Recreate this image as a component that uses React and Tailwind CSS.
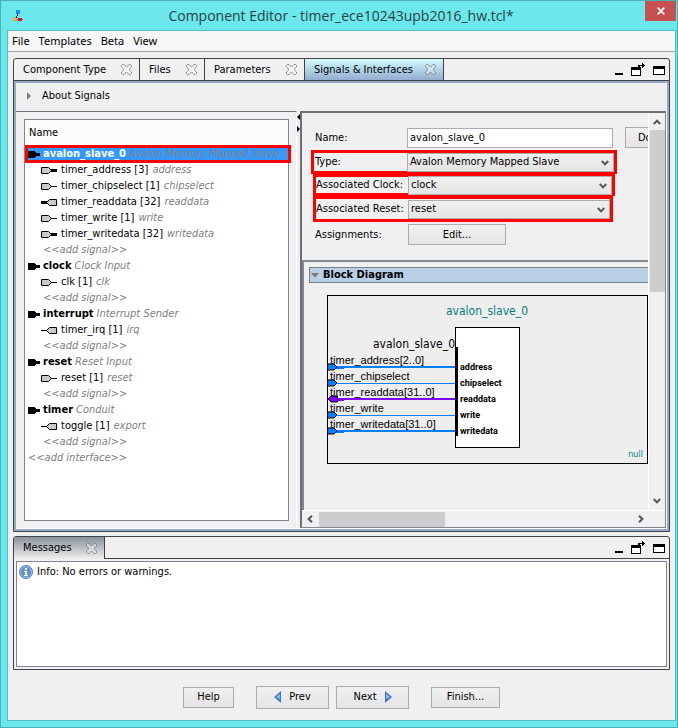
import React, { useState } from 'react';

const TREE = [
  {
    name: 'avalon_slave_0',
    kind: 'Avalon Memory Mapped Slave',
    signals: [
      { name: 'timer_address [3]', role: 'address', dir: 'in', wide: true },
      { name: 'timer_chipselect [1]', role: 'chipselect', dir: 'in' },
      { name: 'timer_readdata [32]', role: 'readdata', dir: 'out', wide: true },
      { name: 'timer_write [1]', role: 'write', dir: 'in' },
      { name: 'timer_writedata [32]', role: 'writedata', dir: 'in', wide: true },
    ],
  },
  { name: 'clock', kind: 'Clock Input', signals: [{ name: 'clk [1]', role: 'clk', dir: 'in' }] },
  { name: 'interrupt', kind: 'Interrupt Sender', signals: [{ name: 'timer_irq [1]', role: 'irq', dir: 'out' }] },
  { name: 'reset', kind: 'Reset Input', signals: [{ name: 'reset [1]', role: 'reset', dir: 'in' }] },
  { name: 'timer', kind: 'Conduit', signals: [{ name: 'toggle [1]', role: 'export', dir: 'out' }] },
];

const WIRES = [
  { label: 'timer_address[2..0]', port: 'address', y: 72, wide: true },
  { label: 'timer_chipselect', port: 'chipselect', y: 88 },
  { label: 'timer_readdata[31..0]', port: 'readdata', y: 104, wide: true, out: true },
  { label: 'timer_write', port: 'write', y: 120 },
  { label: 'timer_writedata[31..0]', port: 'writedata', y: 136, wide: true },
];

function AppIcon() {
  return (
    <svg className="w-4 h-4" viewBox="0 0 16 16" shapeRendering="crispEdges">
      <path d="M2 11h10v1H2z" fill="#777" />
      <path d="M6 6h1v2H6zM5 8h1v2H5z" fill="#111" />
      <rect x="5" y="2" width="4" height="4" fill="#1e90e8" />
      <path d="M3 9h2v1h1v3H2v-3h1z" fill="#f0a040" />
      <path d="M3 11h1v1H3z" fill="#fff" />
      <rect x="7" y="10" width="4" height="3" fill="#e81030" />
      <path d="M8 11h1v1H8z" fill="#500" />
    </svg>
  );
}

function CloseCross() {
  return (
    <svg className="w-[11px] h-[11px]" viewBox="0 0 11 11">
      <path
        d="M1.500.5h1.500l2.500 2.600L8 .5h1.500l1 1V3L7.900 5.500l2.600 2.500v1.500l-1 1H8L5.500 7.900 3 10.500H1.500l-1-1V8l2.600-2.500L.5 3V1.500z"
        fill="#fff"
        fillOpacity="0.4"
        stroke="#777"
        strokeWidth="0.8"
      />
    </svg>
  );
}

function PaneControls() {
  return (
    <div className="ml-auto flex items-center gap-2 pr-1">
      <button type="button" aria-label="Minimize" className="w-2">
        <svg className="w-2 h-3" viewBox="0 0 8 12" shapeRendering="crispEdges">
          <rect x="0" y="9" width="8" height="2" fill="#000" />
        </svg>
      </button>
      <button type="button" aria-label="Detach" className="w-[14px]">
        <svg className="w-[14px] h-[14px]" viewBox="0 0 14 14" shapeRendering="crispEdges">
          <rect x="0" y="4" width="10" height="9" fill="#000" />
          <rect x="1" y="7" width="8" height="5" fill="#fff" />
          <path d="M7 2h5v1H9v2H7z" fill="#000" />
          <path d="M11 0h1v1h1v1h1v1h-1v1h-1v1h-1z" fill="#000" />
        </svg>
      </button>
      <button type="button" aria-label="Maximize" className="w-3">
        <svg className="w-3 h-3" viewBox="0 0 12 12" shapeRendering="crispEdges">
          <rect x="0" y="2" width="12" height="9" fill="#000" />
          <rect x="1" y="5" width="10" height="5" fill="#fff" />
        </svg>
      </button>
    </div>
  );
}

function InterfaceIcon() {
  return (
    <svg className="w-3 h-[7px] shrink-0" viewBox="0 0 12 7" shapeRendering="crispEdges">
      <path d="M0 0h6l2 2h4v3H8L6 7H0z" fill="#000" />
    </svg>
  );
}

function SignalIcon({ dir, wide }) {
  return (
    <svg className="w-4 h-[7px] shrink-0" viewBox="0 0 16 7">
      <g transform={dir === 'out' ? 'matrix(-1 0 0 1 16 0)' : undefined}>
        <path d="M.5.5h7l3 3-3 3h-7z" fill="#c8c8c8" stroke="#000" />
        <path d={wide ? 'M10 2h6v3h-6z' : 'M10 3h6v1h-6z'} fill="#000" />
      </g>
    </svg>
  );
}

function Chevron({ className }) {
  return (
    <svg className={`w-2 h-[6px] ${className}`} viewBox="0 0 8 6">
      <path d="M.8 1l3.2 3.4L7.2 1" fill="none" stroke="#555" strokeWidth="2" />
    </svg>
  );
}

function Tab({ label, active, onClick, className }) {
  return (
    <div
      className={`flex items-center justify-between border-r border-[#3f4347] pl-[9px] pr-[7px] ${
        active ? 'bg-linear-to-b from-[#d2fbfd] to-[#93aed0]' : ''
      } ${className}`}
    >
      <button type="button" onClick={onClick}>{label}</button>
      <button type="button" aria-label={`Close ${label}`}><CloseCross /></button>
    </div>
  );
}

function SelectRow({ id, label, options, boxClass }) {
  return (
    <div className={`relative z-10 flex items-center border-[3px] border-[#f00] ${boxClass}`}>
      <label htmlFor={id} className="w-[92px] shrink-0 whitespace-nowrap">{label}</label>
      <div className="relative flex-1">
        <select
          id={id}
          className="block h-[19px] w-full appearance-none border border-[#acacac] bg-linear-to-b from-[#f0f0f0] to-[#e5e5e5] pl-[2px] outline-none"
        >
          {options.map((o) => (
            <option key={o}>{o}</option>
          ))}
        </select>
        <Chevron className="pointer-events-none absolute right-[5px] top-[7px]" />
      </div>
    </div>
  );
}

function SignalTree() {
  const [selected, setSelected] = useState('avalon_slave_0');

  return (
    <div className="flex-1 border border-[#82878f] bg-white">
      <div className="flex h-[26px] items-center border-b border-[#82878f] bg-[#fcfcfc] pl-1">Name</div>
      <ul className="leading-4 whitespace-nowrap text-[#808080]">
        {TREE.map((itf) => (
          <li key={itf.name}>
            <div
              onClick={() => setSelected(itf.name)}
              className={`relative flex h-4 items-center gap-[3px] pl-[3px] ${
                selected === itf.name ? 'bg-[#3399ff]' : ''
              }`}
            >
              <InterfaceIcon />
              <b className={selected === itf.name ? 'text-white' : 'text-black'}>{itf.name}</b>
              <i>{itf.kind}</i>
              {itf.name === 'avalon_slave_0' && (
                <span className="absolute -inset-y-px left-0 -right-[3px] border-[3px] border-[#f00]" />
              )}
            </div>
            <ul>
              {itf.signals.map((s) => (
                <li key={s.name} className="flex h-4 items-center gap-1 pl-4">
                  <SignalIcon dir={s.dir} wide={s.wide} />
                  <span className="text-black">{s.name}</span>
                  <i>{s.role}</i>
                </li>
              ))}
              <li className="h-4 pl-[18px] italic">&lt;&lt;add signal&gt;&gt;</li>
            </ul>
          </li>
        ))}
        <li className="h-4 pl-[3px] italic">&lt;&lt;add interface&gt;&gt;</li>
      </ul>
    </div>
  );
}

function BlockDiagram() {
  return (
    <svg className="block h-[170px] w-[322px]" viewBox="0 0 322 170">
      <rect x="0.5" y="0.5" width="320" height="168" fill="#eee" stroke="#000" />
      <text x="160" y="20" textAnchor="middle" fontSize="12" fill="#008080">avalon_slave_0</text>
      <rect x="128.5" y="32.5" width="64" height="120" fill="#fff" stroke="#000" />
      <text x="128" y="53" textAnchor="end" fontSize="12">avalon_slave_0</text>
      {WIRES.map((w) => {
        const color = w.out ? '#8000ff' : '#0080ff';
        return (
          <g key={w.port}>
            <text x="3" y={w.y - 3} fontSize="11" fontFamily="Liberation Sans, sans-serif">{w.label}</text>
            <rect x="1" y={w.wide ? w.y - 1 : w.y} width="127" height={w.wide ? 2 : 1} fill={color} />
            {w.wide && <rect x="9" y={w.y - 1} width="8" height="3" fill={color} />}
            <path
              d={w.out ? `M10.5 ${w.y - 3}v6H4l-3-3 3-3z` : `M.5 ${w.y - 3}H7l3 3-3 3H.5z`}
              fill={color}
              stroke="#000"
            />
            <text x="133" y={w.y + 3} fontSize="9" fontWeight="bold" fontFamily="Roboto, sans-serif">{w.port}</text>
          </g>
        );
      })}
      <rect x="129" y="52" width="2" height="89" fill="#000" />
      <text x="316" y="162" textAnchor="end" fontSize="9" fill="#008080">null</text>
    </svg>
  );
}

function SettingsPane() {
  const [name, setName] = useState('avalon_slave_0');

  return (
    <div className="flex min-w-0 flex-1 flex-col border-t-2 border-l-2 border-r border-b border-[#6b6f75] border-r-[#82878f] border-b-[#82878f]">
      <div className="flex min-h-0 flex-1">
        <div className="flex min-w-0 flex-1 flex-col overflow-hidden">
          <div className="flex items-center pt-[14px] pl-[13px]">
            <label htmlFor="name" className="w-[92px] shrink-0">Name:</label>
            <input
              id="name"
              value={name}
              onChange={(e) => setName(e.target.value)}
              className="h-5 w-[206px] shrink-0 border border-[#abadb3] bg-white pl-[2px] outline-none"
            />
            <button
              type="button"
              className="ml-3 h-[21px] w-20 shrink-0 border border-[#acacac] bg-linear-to-b from-[#f0f0f0] to-[#e5e5e5] pl-3 text-left"
            >
              Do
            </button>
          </div>
          <SelectRow
            id="type"
            label="Type:"
            options={['Avalon Memory Mapped Slave']}
            boxClass="mt-[2px] ml-[9px] h-6 w-[306px] pl-[1px]"
          />
          <SelectRow
            id="clock"
            label="Associated Clock:"
            options={['clock']}
            boxClass="ml-[11px] h-[22px] w-[302px]"
          />
          <SelectRow
            id="reset"
            label="Associated Reset:"
            options={['reset']}
            boxClass="ml-[11px] h-[26px] w-[300px]"
          />
          <div className="mt-[2px] flex items-center pl-[13px]">
            <span className="w-[93px] shrink-0">Assignments:</span>
            <button
              type="button"
              className="h-[21px] w-[98px] border border-[#acacac] bg-linear-to-b from-[#f0f0f0] to-[#e5e5e5]"
            >
              Edit...
            </button>
          </div>
          <div className="mt-[15px] flex-1 border-t-2 border-l-2 border-[#82878f] pt-[5px] pl-[5px]">
            <button
              type="button"
              className="flex h-4 w-full items-center gap-1 border border-r-0 border-[#7a8088] bg-[#b8cfe5] pl-px font-bold"
            >
              <svg className="w-2 h-[5px]" viewBox="0 0 8 5">
                <path d="M0 0h8L4 4.500z" fill="#777" />
              </svg>
              Block Diagram
            </button>
            <div className="pt-3 pl-[18px]">
              <BlockDiagram />
            </div>
          </div>
        </div>
        <div className="flex w-[17px] shrink-0 flex-col items-center border-l border-white py-[6px]">
          <Chevron className="rotate-180" />
          <div className="mt-[5px] h-[162px] w-[15px] bg-[#cdcdcd]" />
          <Chevron className="mt-auto" />
        </div>
      </div>
      <div className="flex h-[17px] items-center border-t border-white pr-[20px] pl-1">
        <Chevron className="rotate-90" />
        <div className="ml-[5px] h-[15px] w-[126px] bg-[#cdcdcd]" />
        <Chevron className="ml-auto -rotate-90" />
      </div>
    </div>
  );
}

const TABS = [
  { label: 'Component Type', width: 'w-[126px]' },
  { label: 'Files', width: 'w-[65px]' },
  { label: 'Parameters', width: 'w-[100px]' },
  { label: 'Signals & Interfaces', width: 'w-[139px]' },
];

export default function App() {
  const [tab, setTab] = useState('Signals & Interfaces');

  return (
    <div className="flex min-h-screen flex-col border border-[#4bb0b6] bg-[#6ae8ec] pr-px pb-[6px] pl-[6px] font-['DejaVu_Sans_Condensed','DejaVu_Sans',sans-serif] text-[11px] leading-4 text-black">
      <header className="flex h-[29px] items-center pl-1">
        <AppIcon />
        <h1 className="flex-1 pl-[10px] text-center font-['Open_Sans','Noto_Sans',sans-serif] text-sm text-[#2a4044]">
          Component Editor - timer_ece10243upb2016_hw.tcl*
        </h1>
        <button
          type="button"
          aria-label="Close"
          className="flex h-5 w-[31px] items-center justify-center self-start bg-[#c75050]"
        >
          <svg className="w-2 h-2" viewBox="0 0 8 8">
            <path d="M.7.7l6.600 6.600M7.300.7L.7 7.300" stroke="#fff" strokeWidth="1.700" />
          </svg>
        </button>
      </header>

      <main className="flex flex-1 flex-col border border-[#55bcc1] bg-[#f0f0f0]">
        <nav className="flex h-[21px] items-center gap-[9px] border-b border-[#a0a0a0] bg-[#f5f6f7] pl-1 font-['Noto_Sans','Open_Sans',sans-serif]">
          <button type="button">File</button>
          <button type="button">Templates</button>
          <button type="button">Beta</button>
          <button type="button">View</button>
        </nav>

        <section className="mx-[5px] mt-[6px] flex flex-1 flex-col rounded-t-[3px] border border-[#3f4347]">
          <div className="flex h-[22px] border-b border-[#3f4347]">
            {TABS.map((t) => (
              <Tab
                key={t.label}
                label={t.label}
                active={tab === t.label}
                onClick={() => setTab(t.label)}
                className={t.width}
              />
            ))}
            <PaneControls />
          </div>
          <div className="flex flex-1 flex-col border-2 border-[#94aacb]">
            <button type="button" className="flex h-7 items-center gap-[11px] pb-[2px] pl-[11px]">
              <svg className="w-1 h-2" viewBox="0 0 4 8">
                <path d="M0 0l4 4-4 4z" fill="#808080" />
              </svg>
              About Signals
            </button>
            <div className="flex flex-1 border-r border-b border-white">
              <div className="flex w-[281px] shrink-0 flex-col border-t border-r border-[#6b6f75] border-r-white p-[7px] pl-2">
                <SignalTree />
              </div>
              <svg className="w-[3px] h-6 shrink-0" viewBox="0 0 3 24">
                <path d="M3 3v6L0 6zM0 15v6l3-3z" fill="#000" />
              </svg>
              <SettingsPane />
            </div>
          </div>
        </section>

        <section className="mx-[5px] mt-1 flex h-[134px] flex-col rounded-t-[3px] border border-[#3f4347]">
          <div className="flex h-[22px]">
            <div className="flex w-[91px] items-center justify-between border-r border-[#3f4347] bg-linear-to-b from-[#8a929c] to-[#f0f0f0] pr-[7px] pl-[9px]">
              <span>Messages</span>
              <button type="button" aria-label="Close Messages"><CloseCross /></button>
            </div>
            <div className="flex flex-1 border-b border-[#3f4347]">
              <PaneControls />
            </div>
          </div>
          <div className="m-[2px] flex-1 border border-[#82829a] bg-white pt-[2px] pl-[2px]">
            <div className="flex items-center gap-1">
              <svg className="w-[14px] h-[14px]" viewBox="0 0 14 14">
                <circle cx="7" cy="7" r="6.500" fill="#5f93c8" stroke="#5a7fb4" />
                <circle cx="7" cy="7" r="5.500" fill="none" stroke="#a8c8e8" strokeWidth="0.800" />
                <rect x="6" y="3" width="2" height="2" fill="#fff" />
                <path d="M5 6h3v4h1v1H5v-1h1V7H5z" fill="#fff" />
              </svg>
              Info: No errors or warnings.
            </div>
          </div>
        </section>

        <footer className="flex h-[50px] items-center pl-[175px] pt-1">
          <button type="button" className="h-[21px] w-[51px] border border-[#acacac] bg-linear-to-b from-[#f0f0f0] to-[#e5e5e5]">
            Help
          </button>
          <button type="button" className="ml-[22px] flex h-[23px] w-[73px] items-center justify-center gap-2 border border-[#acacac] bg-linear-to-b from-[#f0f0f0] to-[#e5e5e5]">
            <svg className="w-[7px] h-3" viewBox="0 0 7 12">
              <path d="M7 0v12L0 6z" fill="#3f78d0" />
              <path d="M6 3v5L2 6z" fill="#8fb8ee" />
            </svg>
            Prev
          </button>
          <button type="button" className="ml-[7px] flex h-[23px] w-[73px] items-center justify-center gap-2 border border-[#acacac] bg-linear-to-b from-[#f0f0f0] to-[#e5e5e5]">
            Next
            <svg className="w-[7px] h-3" viewBox="0 0 7 12">
              <path d="M0 0v12l7-6z" fill="#3f78d0" />
              <path d="M1 3v5l4-2z" fill="#8fb8ee" />
            </svg>
          </button>
          <button type="button" className="ml-[22px] h-[21px] w-[69px] border border-[#acacac] bg-linear-to-b from-[#f0f0f0] to-[#e5e5e5]">
            Finish...
          </button>
        </footer>
      </main>
    </div>
  );
}
